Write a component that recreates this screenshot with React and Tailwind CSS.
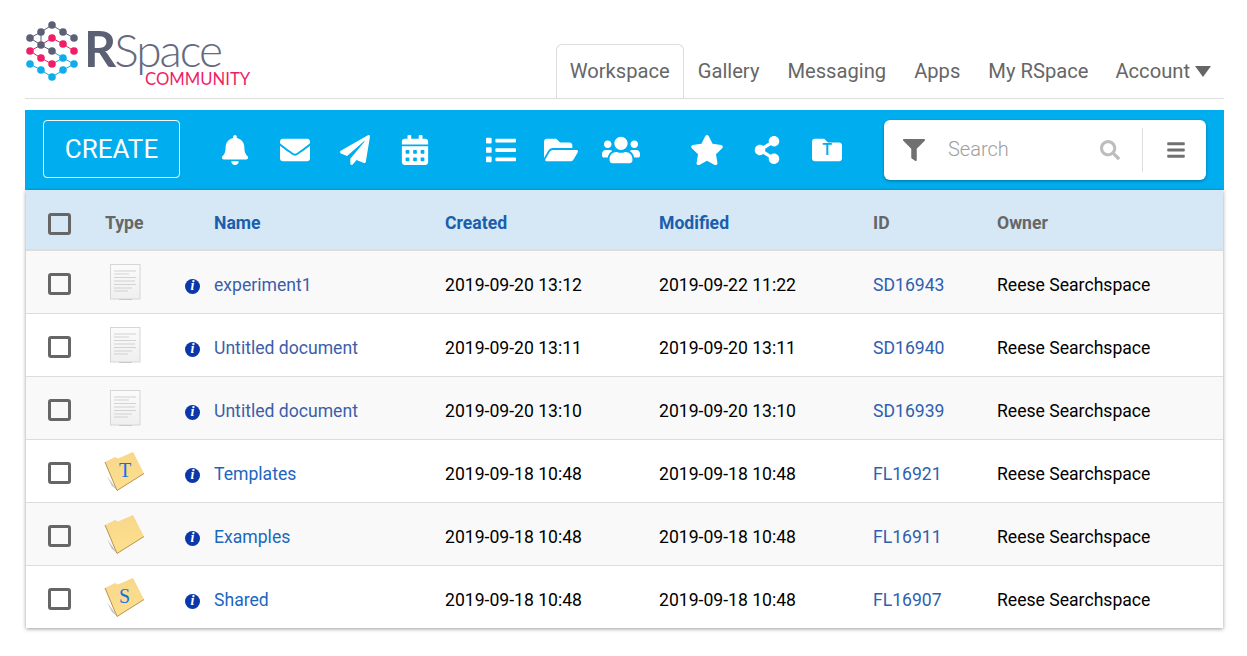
import React from "react";
import { FaBell, FaEnvelope, FaPaperPlane, FaCalendarAlt, FaList, FaFolderOpen, FaUsers, FaStar, FaShareAlt, FaFolder, FaFilter, FaSearch, FaBars } from "react-icons/fa";

const rows = [
  ["doc", "experiment1", "2019-09-20 13:12", "2019-09-22 11:22", "SD16943"],
  ["doc", "Untitled document", "2019-09-20 13:11", "2019-09-20 13:11", "SD16940"],
  ["doc", "Untitled document", "2019-09-20 13:10", "2019-09-20 13:10", "SD16939"],
  ["T", "Templates", "2019-09-18 10:48", "2019-09-18 10:48", "FL16921"],
  ["", "Examples", "2019-09-18 10:48", "2019-09-18 10:48", "FL16911"],
  ["S", "Shared", "2019-09-18 10:48", "2019-09-18 10:48", "FL16907"],
];

function Logo() {
  const gray = [[52,24],[41,31],[63,31],[30,37],[74,37],[41,44],[52,50]];
  const pink = [[52,37],[63,43],[74,50],[30,50],[41,57],[52,63]];
  const blue = [[63,57],[74,63],[30,63],[41,69],[52,76],[63,69]];
  return (
    <svg width="60" height="70" viewBox="26 18 60 70" className="block shrink-0">
      <g fill="none" strokeWidth="1">
        <path d="M30 37L41 31L52 24L63 31L74 37M30 37L41 44L52 50M41 31V44" stroke="#5c6075" />
        <path d="M41 44L52 37L63 43L74 50M30 50L41 57L52 63M30 50L41 44" stroke="#ee1f66" />
        <path d="M52 50L63 57L74 63L63 69L52 76L41 69L30 63M52 63L63 57" stroke="#10ade8" />
      </g>
      {gray.map(([x,y],i)=><circle key={i} cx={x} cy={y} r="3.8" fill="#5c6075" />)}
      {pink.map(([x,y],i)=><circle key={i} cx={x} cy={y} r="3.8" fill="#ee1f66" />)}
      {blue.map(([x,y],i)=><circle key={i} cx={x} cy={y} r="3.8" fill="#10ade8" />)}
    </svg>
  );
}

function DocIcon() {
  return (
    <svg width="31" height="37" viewBox="0 0 31 37" className="block">
      <defs><linearGradient id="pg" x1="0" y1="0" x2="0" y2="1"><stop offset="0" stopColor="#fbfbfb"/><stop offset="1" stopColor="#efefef"/></linearGradient></defs>
      <rect x="0.5" y="0.5" width="29.5" height="34.5" fill="url(#pg)" stroke="#d6d6d6" />
      <path d="M9 35.5H22" stroke="#c9c9c9" strokeWidth="1" />
      <g stroke="#c4c4c4" strokeWidth="1.2" opacity="0.7" style={{ filter: "blur(0.6px)" }}>
        <path d="M4 7H26M4 10H19M4 13.5H26M4 17H25M4 20.5H26M4 24H22M4 27H18" />
      </g>
    </svg>
  );
}

function FolderIcon({ letter }) {
  return (
    <div className="relative w-[42px] h-[40px] -ml-px">
      <svg width="42" height="40" viewBox="0 0 42 40" className="block">
        <defs><linearGradient id="fg" x1="0" y1="0" x2="0" y2="1"><stop offset="0" stopColor="#f8d78b"/><stop offset="1" stopColor="#fde08e"/></linearGradient></defs>
        <path d="M3 24L13 38L8 34Z" fill="#a8a8a8" opacity="0.7"/>
        <path d="M1 10L11 5L14 6.5L29 0L40 21.5L13 38.5Z" fill="url(#fg)" />
        <path d="M1 10L13 38.5L40 21.5" fill="none" stroke="#bb9150" strokeWidth="1" />
      </svg>
      {letter && <span className="absolute left-[15px] top-[7px] text-[20px] leading-[22px] text-[#0f6ff0] font-['Liberation_Serif',serif]">{letter}</span>}
    </div>
  );
}

function Info() {
  return (
    <span className="flex items-center justify-center w-[15px] h-[15px] rounded-full bg-[#0b37a8] text-white text-[14px] leading-none font-bold italic font-['Liberation_Serif',serif]">i</span>
  );
}

function Check() {
  return <span className="block w-[23px] h-[22px] rounded-[3px] border-[3px] border-[#666666]" />;
}

function Tool({ children }) {
  return <div className="w-[60px] flex items-center justify-center text-white">{children}</div>;
}

function Tab({ children, active }) {
  return (
    <div className={active
      ? "h-[54px] -mb-px px-[13px] pb-px mt-px flex items-center bg-white border border-b-0 border-[#dddddd] rounded-t-[6px]"
      : "h-[55px] pt-[2px] px-[14px] flex items-center"}>
      {children}
    </div>
  );
}

export default function App() {
  return (
    <div className="w-[1247px] h-[656px] bg-white overflow-hidden font-['Roboto',sans-serif] px-[25px]">
      <header className="w-[1199px] h-[99px] border-b border-[#dddddd] flex justify-between items-end">
        <div className="self-start flex h-[98px]">
          <div className="pt-[19px] ml-px"><Logo /></div>
          <div className="flex-1 w-[170px]">
            <div className="pt-[28px] -ml-[2px] text-[46px] leading-[41px] text-[#666a7e] font-['Lato',sans-serif] font-light tracking-[-2px]"><span className="font-bold text-[50px] text-[#5c6075]">R</span>Space</div>
            <div className="pl-[59px] text-[16.7px] leading-[18px] text-[#ee1f66] font-['Lato',sans-serif] whitespace-nowrap">COMMUNITY</div>
          </div>
        </div>
        <nav className="flex text-[20.16px] text-[#666666] mr-[-1px]">
          <Tab active>Workspace</Tab>
          <Tab>Gallery</Tab>
          <Tab>Messaging</Tab>
          <Tab>Apps</Tab>
          <Tab>My RSpace</Tab>
          <div className="h-[55px] pt-[2px] pl-[13px] pr-[14px] flex items-center gap-[5px]">Account <span className="w-0 h-0 border-x-[8px] border-x-transparent border-t-[11px] border-t-[#666666]" /></div>
        </nav>
      </header>

      <div className="mt-[11px] h-[80px] w-[1199px] bg-[#00adef] flex items-center pl-[18px]">
        <div className="self-start mt-[10px] pt-[1px] w-[137px] h-[58px] border border-white rounded-[4px] flex items-center justify-center text-white text-[26px]">CREATE</div>
        <div className="ml-[25px] flex"><Tool><FaBell size={30} /></Tool><Tool><FaEnvelope size={30} /></Tool><Tool><FaPaperPlane size={30} /></Tool><Tool><FaCalendarAlt size={30} /></Tool></div>
        <div className="ml-[26px] flex"><Tool><FaList size={30} /></Tool><Tool><FaFolderOpen size={34} /></Tool><Tool><FaUsers size={38} /></Tool></div>
        <div className="ml-[26px] flex">
          <Tool><FaStar size={34} /></Tool>
          <Tool><FaShareAlt size={28} /></Tool>
          <Tool>
            <div className="relative flex items-center justify-center">
              <FaFolder size={30} />
              <span className="absolute top-[7px] text-[#00adef] text-[16px] leading-[16px] font-medium">T</span>
            </div>
          </Tool>
        </div>
        <div className="ml-[27px] w-[322px] h-[60px] bg-white rounded-[6px] shadow-[0_1px_3px_rgba(0,0,0,0.35)] flex items-center">
          <FaFilter size={22} className="ml-[19px] text-[#707070]" />
          <span className="ml-[23px] pb-[2px] text-[20px] font-light text-[#9e9e9e]">Search</span>
          <FaSearch size={20} className="ml-auto text-[#bdbdbd]" />
          <span className="ml-[22px] w-px h-[44px] bg-[#dedede]" />
          <FaBars size={20} className="ml-[23px] mr-[20px] text-[#707070] w-[20px]" />
        </div>
      </div>

      <div className="ml-px w-[1197px] bg-white shadow-[0_1px_4px_rgba(0,0,0,0.4)]">
        <div className="h-[61px] pt-[9px] bg-[#d6e8f5] border-b-2 border-[#dddddd] flex items-center text-[17.6px] font-bold">
          <div className="w-[79px] pl-[22px]"><Check /></div>
          <div className="w-[109px] pb-[2px] text-[#666666]">Type</div>
          <div className="w-[231px] pb-[2px] text-[#1a5ead]">Name</div>
          <div className="w-[214px] pb-[2px] text-[#1a5ead]">Created</div>
          <div className="w-[214px] pb-[2px] text-[#1a5ead]">Modified</div>
          <div className="w-[124px] pb-[2px] text-[#666666]">ID</div>
          <div className="pb-[2px] text-[#666666]">Owner</div>
        </div>
        {rows.map((r, i) => (
          <div key={i} className={`pt-[4px] flex items-center text-[17.6px] ${i < 5 ? "h-[63px] border-b border-[#dddddd]" : "h-[62px]"} ${i % 2 === 0 ? "bg-[#f9f9f9]" : "bg-white"}`}>
            <div className="w-[79px] pl-[22px]"><Check /></div>
            <div className="w-[80px]">{r[0] === "doc" ? <div className="ml-[5px] -mt-[4px]"><DocIcon /></div> : <div className="-mt-[2px]"><FolderIcon letter={r[0]} /></div>}</div>
            <div className="w-[29px] pt-[4px]"><Info /></div>
            <div className={`w-[231px] pt-[2px] ${r[0] === "doc" ? "text-[#3b5ea9]" : "text-[#1c66bf]"}`}>{r[1]}</div>
            <div className="w-[214px] pt-[2px] text-black">{r[2]}</div>
            <div className="w-[214px] pt-[2px] text-black">{r[3]}</div>
            <div className="w-[124px] pt-[2px] text-[#2f5fb0]">{r[4]}</div>
            <div className="pt-[2px] text-black">Reese Searchspace</div>
          </div>
        ))}
      </div>
    </div>
  );
}
